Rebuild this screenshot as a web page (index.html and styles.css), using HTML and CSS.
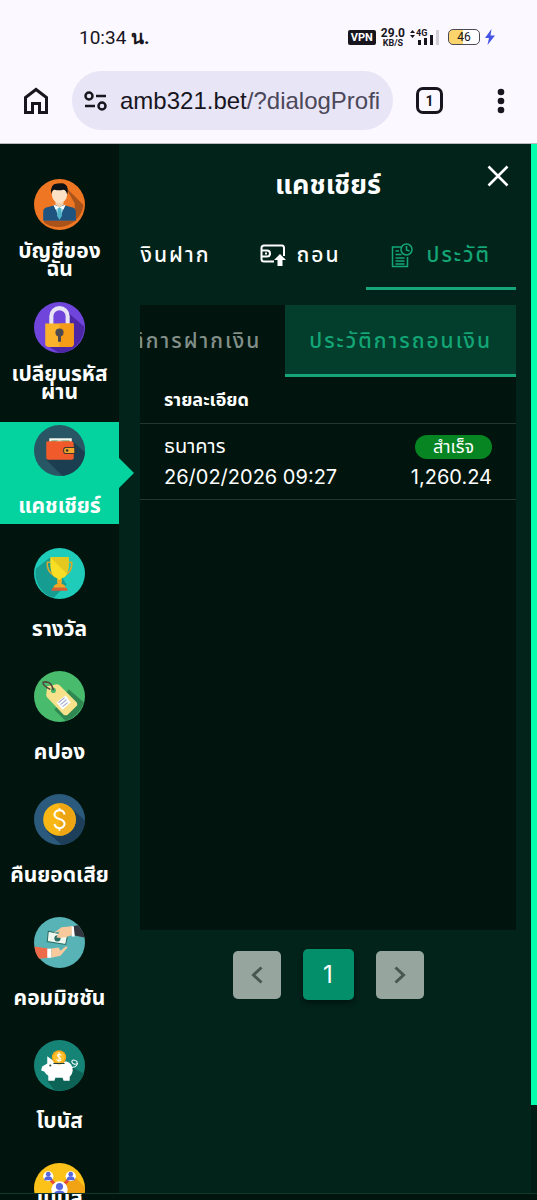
FILE: index.html
```html
<!DOCTYPE html>
<html lang="th">
<head>
<meta charset="utf-8">
<meta name="viewport" content="width=device-width, initial-scale=1">
<title>แคชเชียร์</title>
<link rel="stylesheet" href="styles.css">
</head>
<body>
<div class="screen">
  <header class="status">
    <time class="clock">10:34 <b>น.</b></time>
    <div class="status-icons">
      <span class="vpn">VPN</span>
      <span class="speed"><b>29.0</b><small>KB/S</small></span>
      <svg class="signal" width="30" height="18" viewBox="0 0 30 18" aria-label="4G">
        <path d="M0 5l2.500-3 2.500 3zM0 7l2.500 3 2.500-3z" fill="#16141c"/>
        <text x="6" y="8" class="net">4G</text>
        <path d="M8 12h3v5H8zM14 10h3v7h-3zM20 7h3v10h-3z" fill="#16141c"/>
        <path d="M26 2h3v15h-3z" fill="#d2cfd9"/>
      </svg>
      <span class="battery">46</span>
      <svg width="10" height="16" viewBox="0 0 10 16"><path d="M6.500 0L0 9h4l-1.500 7L10 6.500H5.500z" fill="#4453e6"/></svg>
    </div>
  </header>

  <div class="browser">
    <button class="bare" aria-label="หน้าแรก">
      <svg width="26" height="28" viewBox="0 0 26 28" fill="none" stroke="#17151d" stroke-width="3"><path d="M2.500 25.500V10.500L13 2.500l10.500 8v15h-7v-9h-7v9z"/></svg>
    </button>
    <div class="address">
      <svg width="24" height="20" viewBox="0 0 24 20" fill="none" stroke="#17151d" stroke-width="2.500"><circle cx="5" cy="5" r="3.500"/><path d="M12 5h10M1 15h10"/><circle cx="18" cy="15" r="3.500"/></svg>
      <span class="url">amb321.bet<i>/?dialogProfi</i></span>
    </div>
    <button class="tab-count">1</button>
    <button class="bare more" aria-label="เมนู">
      <svg width="8" height="26" viewBox="0 0 8 26" fill="#17151d"><circle cx="4" cy="4" r="3.300"/><circle cx="4" cy="13" r="3.300"/><circle cx="4" cy="22" r="3.300"/></svg>
    </button>
  </div>

  <div class="app">
    <nav class="side">
      <a href="#account" class="item">
        <svg class="icon" viewBox="0 0 50 50"><circle cx="25" cy="25" r="25" fill="#ef7622"/><path d="M31 8l17.500 17.500A25 25 0 0 1 10 43l0-2h30V24z" fill="#a9531b"/><path d="M9 41V32q0-4 5-4.500l7-2h8l7 2q5 .5 5 4.500v9z" fill="#1f5480"/><path d="M20 26l5 14 5-14z" fill="#9fd9e5"/><path d="M24 27h2l1.500 9-2.500 4-2.500-4z" fill="#4fb3c6"/><path d="M19 25l6 3 6-3-2 5-4-2-4 2z" fill="#fff"/><path d="M21 20h8v5l-4 3-4-3z" fill="#f3cda7"/><ellipse cx="25" cy="15" rx="7.500" ry="8.500" fill="#fbe1c5"/><path d="M17 15Q15 5 23 4.500q9-2 10 5 .5 3-.5 6-1-5-4-5-4 1-8 0-3 0-3.500 4.500z" fill="#0c1216"/></svg>
        <span>บัญชีของ<br>ฉัน</span>
      </a>
      <a href="#password" class="item">
        <svg class="icon" viewBox="0 0 50 50"><circle cx="25" cy="25" r="25" fill="#7045dc"/><path d="M33 10l16 14A25 25 0 0 1 25 50L13 43l20-22z" fill="#4c26a5"/><path d="M17 24v-10a8 8 0 0 1 16 0v10" fill="none" stroke="#e8e4f3" stroke-width="4"/><path d="M11 21h28v20q0 3-3 3H14q-3 0-3-3z" fill="#fbb32c"/><path d="M25 21h14v20q0 3-3 3H25z" fill="#f49b18"/><circle cx="25" cy="30" r="4" fill="#4b4a50"/><path d="M23.500 31h3v8h-3z" fill="#4b4a50"/></svg>
        <span>เปลียนรหัส<br>ผ่าน</span>
      </a>
      <a href="#cashier" class="item active" aria-current="page">
        <svg class="icon" viewBox="0 0 50 50"><circle cx="25" cy="25" r="25" fill="#295664"/><path d="M38 16l12 11A25 25 0 0 1 28 50L12 34z" fill="#1b3e50"/><path d="M15 13h22v8H15z" fill="#f4f7ee"/><path d="M17 15h18v5H17z" fill="#79aa7b"/><path d="M21 17q4-4 8 0z" fill="#e9f3df"/><path d="M12 17q0-1 2-1h22q3 0 3 3v13q0 2-2 2H14q-2 0-2-2z" fill="#f15a2b"/><path d="M31 22h9v6h-9q-2 0-2-3t2-3z" fill="#f8a829" stroke="#3b3431"/><circle cx="32.500" cy="25" r="1.300" fill="#33302d"/></svg>
        <span>แคชเชียร์</span>
      </a>
      <a href="#rewards" class="item">
        <svg class="icon" viewBox="0 0 50 50"><circle cx="25" cy="25" r="25" fill="#1eccb9"/><path d="M16 9L2 20a25 25 0 0 0 17 29l13-13z" fill="#169c91"/><path d="M16 14h-3q-1 9 8 14M34 14h3q1 9-8 14" fill="none" stroke="#dba72d" stroke-width="1.500"/><path d="M16 9h18v9q-1 11-7 12v4h-4v-4q-6-1-7-12z" fill="#f8df25"/><path d="M16 9h18v9q0 4-2 7z" fill="#e4c71f"/><path d="M23 31h4v4q4 1 4 4H19q0-3 4-4z" fill="#f5a724"/><path d="M18 39h14l1 3H17z" fill="#d95e34"/></svg>
        <span>รางวัล</span>
      </a>
      <a href="#coupon" class="item">
        <svg class="icon" viewBox="0 0 50 50"><circle cx="25" cy="25" r="25" fill="#48bb6d"/><path d="M34 18l15 13q-5 14-18 18L20 38z" fill="#2f8851"/><path d="M13 15l9-2q2 0 3 1l17 17q1 2 0 3l-9 9q-2 1-4 0L13 26q-1-1-1-3z" fill="#f7e18a"/><circle cx="19" cy="19" r="2.500" fill="#48bb6d"/><path d="M22 31l9-7 5 7-8 7z" fill="#fff"/><path d="M24 31l6-5M26 33l6-5M28 35l5-4" stroke="#9ba6cf"/><path d="M19 19Q17 9 9 11q-1 3 7 7" fill="none" stroke="#54423b" stroke-width="1.500"/></svg>
        <span>คปอง</span>
      </a>
      <a href="#cashback" class="item">
        <svg class="icon" viewBox="0 0 50 50"><circle cx="25" cy="25" r="25" fill="#2b5a7c"/><path d="M38 15l12 11A25 25 0 0 1 27 50L12 36z" fill="#1e3f59"/><circle cx="25" cy="25" r="16" fill="#f9b715"/><path d="M25 9a16 16 0 0 1 0 32z" fill="#eda514"/><path d="M30 20q-1-4-5-4t-5 4q0 3 5 4.500t5 5q-1 4-5 4t-5-4M25 14v3M25 33v3" fill="none" stroke="#fff" stroke-width="2"/></svg>
        <span>คืนยอดเสีย</span>
      </a>
      <a href="#commission" class="item">
        <svg class="icon" viewBox="0 0 50 50"><circle cx="25" cy="25" r="25" fill="#57b3b6"/><path d="M38 9l5 -1q6 6 6.500 12l-11-2z" fill="#34363f"/><path d="M36 9h3l1 10h-3z" fill="#fff"/><path d="M14 14l19 4-2 9-18-3z" fill="#eef7ee" stroke="#286c63"/><circle cx="23" cy="21" r="3" fill="#286c63"/><path d="M37 9l-10 1-8 6 6-2-3 6q8 1 15-2z" fill="#f7c99c"/><path d="M0.500 29l13.500 2v9l-9 1q-4-5-4.500-12z" fill="#ed6b49"/><path d="M13 31h4v9h-4z" fill="#fff"/><path d="M17 31l7-1 2 3 5-4q3 0 1 2l-6 7-9 2z" fill="#f7c99c"/></svg>
        <span>คอมมิชชัน</span>
      </a>
      <a href="#bonus" class="item">
        <svg class="icon" viewBox="0 0 50 50"><circle cx="25" cy="25" r="25" fill="#158477"/><path d="M38 27l11 6a25 25 0 0 1-29 16l-7-9z" fill="#0e6357"/><path d="M8 26l5-3 0-7 7 5h12q6 2 6 9-1 5-3 6v4h-6l-1-3h-7l-1 3h-6v-5q-3-2-4-4l-3-1z" fill="#fff"/><circle cx="16" cy="25" r="1" fill="#16443e"/><path d="M37 27q7-1 5-6-4-3-5 0 1 4 6 2" fill="none" stroke="#fff"/><circle cx="24.500" cy="17" r="7" fill="#f7a718"/><circle cx="24.500" cy="17" r="5.500" fill="#fbc02b"/><path d="M27 15q-3-2-4 0 0 1 2 2t1 3q-2 1-4-1M24.500 12v10" fill="none" stroke="#fff"/><path d="M19 23h11" stroke="#173f39"/></svg>
        <span>โบนัส</span>
      </a>
      <a href="#friends" class="item" aria-label="เพื่อน">
        <svg class="icon" viewBox="0 0 50 50"><circle cx="25" cy="25" r="25" fill="#fdc21a"/><path d="M36 9l14 15a25 25 0 0 1-22 26L18 35z" fill="#f1a313"/><path d="M14 14l11 12 11-12" fill="none" stroke="#e64b36" stroke-width="3"/><circle cx="14" cy="13" r="5" fill="#fff"/><circle cx="36" cy="13" r="5" fill="#fff"/><g fill="#5666df"><circle cx="14" cy="11" r="2.300"/><path d="M10 17q0-4 4-4t4 4z"/><circle cx="36" cy="11" r="2.300"/><path d="M32 17q0-4 4-4t4 4z"/></g><circle cx="25" cy="26" r="8" fill="#fff"/><circle cx="25" cy="23" r="3.500" fill="#5666df"/><path d="M19 33q0-6 6-6t6 6z" fill="#5666df"/></svg>
      </a>
    </nav>

    <main class="panel">
      <div class="title">
        <h1>แคชเชียร์</h1>
        <button class="bare close" aria-label="ปิด"><svg width="22" height="22" viewBox="0 0 22 22" stroke="#fff" stroke-width="2.500"><path d="M1.500 1.500l19 19M20.500 1.500l-19 19"/></svg></button>
      </div>

      <div class="tabs">
        <button class="tab">เงินฝาก</button>
        <button class="tab">
          <svg width="26" height="22" viewBox="0 0 26 22" fill="none" stroke="#fff" stroke-width="2"><path d="M14 17.500H4q-2.500 0-2.500-2.500V4Q1.500 1.500 4 1.500h18q2 0 2 2.500v8"/><path d="M2 6.500h5q3 0 3 3t-3 3H2"/><path d="M6 8.500v2"/><path d="M20 10l6 6h-3.500v6h-5v-6H14z" fill="#fff" stroke="none"/></svg>
          ถอน
        </button>
        <button class="tab selected">
          <svg width="22" height="25" viewBox="0 0 22 25" fill="none" stroke="#13a676" stroke-width="1.500"><path d="M10 4H1.500v19.500h15V14"/><circle cx="15.500" cy="6.500" r="5.500"/><path d="M15.500 3v4l3 1M4.500 8H8M4.500 11.500h6M4.500 15h9M4.500 18h9M4.500 21h9"/></svg>
          ประวัติ
        </button>
      </div>

      <section class="history">
        <div class="subtabs">
          <button class="subtab">ประวัติการฝากเงิน</button>
          <button class="subtab selected">ประวัติการถอนเงิน</button>
        </div>
        <table class="records">
          <thead><tr><th colspan="2">รายละเอียด</th></tr></thead>
          <tbody><tr>
            <td>ธนาคาร<br>26/02/2026 09:27</td>
            <td class="amount"><span class="badge">สำเร็จ</span><br>1,260.24</td>
          </tr></tbody>
        </table>
      </section>

      <div class="pager">
        <button class="page" aria-label="ก่อนหน้า"><svg width="12" height="18" viewBox="0 0 12 18" fill="none" stroke="#475751" stroke-width="3"><path d="M10.500 1.500L2.500 9l8 7.500"/></svg></button>
        <button class="page current" aria-current="page">1</button>
        <button class="page" aria-label="ถัดไป"><svg width="12" height="18" viewBox="0 0 12 18" fill="none" stroke="#475751" stroke-width="3"><path d="M1.500 1.500L9.500 9l-8 7.500"/></svg></button>
      </div>
    </main>
    <div class="scroll"><div class="thumb"></div></div>
    <footer class="dock"><span>โบนัส</span></footer>
  </div>
</div>
</body>
</html>
```
FILE: styles.css
```css
* { box-sizing: border-box; }
body { margin: 0; font-family: Inter, "Noto Sans Thai", "Noto Sans", sans-serif; color: #fff; }
button { font: inherit; color: inherit; background: none; border: 0; padding: 0; }
svg { display: block; flex: none; }
.screen { display: flex; flex-direction: column; height: 100vh; overflow: hidden; background: #fbf8ff; }

.status { display: flex; justify-content: space-between; align-items: center; height: 56px; padding: 18px 42px 0 79px; color: #17151d; }
.clock { font: 19px Roboto, sans-serif; }
.status-icons { display: flex; align-items: center; gap: 5px; font-family: Roboto, sans-serif; }
.vpn { padding: 0 3px; border-radius: 2px; background: #17151d; color: #fff; font-size: 11px; line-height: 15px; font-weight: 700; }
.speed { display: flex; flex-direction: column; align-items: center; font-size: 12px; line-height: 12px; }
.speed small { font-size: 9px; line-height: 9px; font-weight: 700; }
.net { font: 700 9px Roboto, sans-serif; fill: #17151d; }
.battery { width: 32px; margin-left: 3px; border: 1px solid #4c4957; border-radius: 5px; background: linear-gradient(90deg, #fbd46c 45%, #fff 45%); font-size: 12px; line-height: 14px; text-align: center; }

.browser { display: flex; align-items: center; gap: 23px; height: 88px; padding: 2px 32px 0 23px; border-bottom: 1px solid #bbb; color: #17151d; }
.address { display: flex; align-items: center; flex: 1; min-width: 0; gap: 12px; height: 59px; padding: 0 9px 0 12px; border-radius: 30px; background: #e8e5f7; }
.url { overflow: hidden; white-space: nowrap; font: 24px "Liberation Sans", sans-serif; }
.url i { font-style: normal; color: #4c4859; }
.tab-count { width: 27px; height: 27px; border: 3px solid #17151d; border-radius: 7px; font: 700 14px Roboto, sans-serif; }
.more { margin-left: 31px; }

.app { position: relative; display: flex; flex: 1; min-height: 0; background: #02231a; }
.side { display: flex; flex-direction: column; flex: 0 0 119px; gap: 21px; padding-top: 32px; background: #01150e; }
.item { position: relative; display: flex; flex: none; flex-direction: column; align-items: center; gap: 12px; padding-top: 3px; color: #fff; font-size: 21px; line-height: 18px; font-weight: 700; text-align: center; text-decoration: none; }
.item span { display: grid; place-content: center; min-height: 36px; white-space: nowrap; }
.icon { width: 51px; height: 51px; }
.active { background: #04d39f; }
.active::after { content: ""; position: absolute; left: 100%; top: 36px; border: 15px solid transparent; border-right: 0; border-left-color: #04d39f; }

.panel { flex: 1; min-width: 0; padding: 0 15px 0 21px; }
.title { position: relative; padding-top: 22px; }
.title h1 { margin: 0; font-size: 27px; line-height: 38px; text-align: center; }
.close { position: absolute; top: 21px; right: 7px; }
.tabs, .subtabs { display: flex; justify-content: flex-end; height: 72px; overflow: hidden; font-size: 21px; font-weight: 500; }
.tabs { margin-top: 14px; }
.tab, .subtab { flex: none; letter-spacing: 2px; white-space: nowrap; }
.tab { display: flex; align-items: center; justify-content: center; gap: 10px; padding: 2px 25px 0; }
.tab.selected { gap: 14px; }
.selected { color: #13a676; box-shadow: inset 0 -3px #17a679; }
.history { display: flex; flex-direction: column; height: 625px; margin-top: 15px; background: #01150e; }
.subtab { padding: 0 24px; color: #83908a; }
.subtab.selected { background: #033d2c; color: #13a676; }
.records { width: 100%; border-collapse: collapse; font-size: 20px; line-height: 31px; }
.records tr { border-bottom: 1px solid #22372f; }
.records th { height: 46px; padding: 0 24px; font-size: 18px; text-align: left; }
.records td { padding: 7px 24px 6px; white-space: nowrap; }
.records .amount { text-align: right; }
.badge { display: inline-block; padding: 0 18px; border-radius: 12px; background: #068522; font-size: 18px; line-height: 24px; }
.pager { display: flex; justify-content: center; align-items: center; gap: 22px; padding-top: 19px; }
.page { display: grid; place-items: center; width: 48px; height: 48px; border-radius: 5px; background: #96a69f; }
.page.current { width: 51px; height: 51px; background: #028f6a; font-size: 24px; box-shadow: 0 3px 5px #01150e; }
.scroll { flex: 0 0 6px; background: #011c14; }
.thumb { height: 91%; background: #04ffad; }
.dock { position: absolute; inset: auto 0 0; height: 7px; overflow: hidden; border-top: 1px solid #12382d; background: #01150e; }
.dock span { display: block; width: 119px; font-size: 21px; line-height: 8px; font-weight: 700; text-align: center; }
```
